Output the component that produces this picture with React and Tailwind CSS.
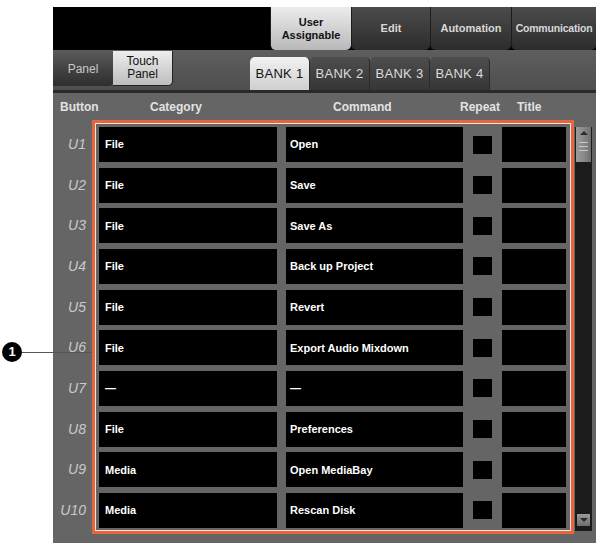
import React from "react";

const rows = [
  { id: "U1", category: "File", command: "Open" },
  { id: "U2", category: "File", command: "Save" },
  { id: "U3", category: "File", command: "Save As" },
  { id: "U4", category: "File", command: "Back up Project" },
  { id: "U5", category: "File", command: "Revert" },
  { id: "U6", category: "File", command: "Export Audio Mixdown" },
  { id: "U7", category: "—", command: "—" },
  { id: "U8", category: "File", command: "Preferences" },
  { id: "U9", category: "Media", command: "Open MediaBay" },
  { id: "U10", category: "Media", command: "Rescan Disk" },
];

const font = "font-['Liberation_Sans',Arial,sans-serif]";

function TopTab({ children, active, width }) {
  return (
    <div
      className={`${width} h-full flex items-center justify-center text-center leading-[13px] font-bold text-[11px] rounded-b-[5px] border-l border-[#1c1c1c] ${
        active
          ? "bg-gradient-to-b from-[#ececec] to-[#b9b9b9] text-[#111]"
          : "bg-gradient-to-b from-[#4c4c4c] to-[#2c2c2c] text-[#d8d8d8]"
      }`}
    >
      {children}
    </div>
  );
}

function BankTab({ label, active }) {
  return (
    <div
      className={`w-[60px] h-[33px] flex items-center justify-center text-[13px] tracking-[0.3px] rounded-t-[5px] border-r border-[#2a2a2a] ${
        active
          ? "bg-gradient-to-b from-[#f2f2f2] to-[#cfcfcf] text-[#111]"
          : "bg-gradient-to-b from-[#4e4e4e] to-[#363636] text-[#dcdcdc]"
      }`}
    >
      {label}
    </div>
  );
}

export default function App() {
  return (
    <div className={`relative w-[596px] h-[548px] bg-white pt-[7px] pl-[53px] ${font}`}>
      <div className="w-[543px] h-[536px] flex flex-col bg-black">
        {/* mode tabs */}
        <div className="h-[43px] flex justify-end bg-black">
          <TopTab active width="w-[81px]">
            User
            <br />
            Assignable
          </TopTab>
          <TopTab width="w-[79px]">Edit</TopTab>
          <TopTab width="w-[81px]">Automation</TopTab>
          <TopTab width="w-[85px]">
            <span className="text-[10.5px] tracking-[-0.2px]">Communication</span>
          </TopTab>
        </div>

        {/* panel + bank selectors */}
        <div className="h-[40px] flex items-start bg-gradient-to-b from-[#5e5e5e] to-[#4f4f4f]">
          <div className="w-[60px] h-[35px] mt-px flex items-center justify-center text-[12px] text-[#c8c8c8] bg-gradient-to-b from-[#5a5a5a] to-[#2e2e2e] rounded-br-[4px]">
            Panel
          </div>
          <div className="w-[60px] h-[35px] mt-px flex flex-col items-center justify-center text-center leading-[13px] text-[12px] text-[#111] bg-gradient-to-b from-[#eeeeee] to-[#bdbdbd] rounded-br-[5px] border-r border-b border-[#222]">
            <span>Touch</span>
            <span>Panel</span>
          </div>
          <div className="ml-[77px] mt-[7px] flex">
            <BankTab label="BANK 1" active />
            <BankTab label="BANK 2" />
            <BankTab label="BANK 3" />
            <BankTab label="BANK 4" />
          </div>
        </div>
        <div className="h-[3px] bg-[#2a2a2a]" />

        {/* assignment table */}
        <div className="relative flex-1 bg-[#656565]">
          <div className="h-[27px] flex items-center text-[12px] font-bold text-[#e2e2e2]">
            <span className="w-[97px] pl-[7px]">Button</span>
            <span className="w-[183px]">Category</span>
            <span className="w-[127px]">Command</span>
            <span className="w-[57px]">Repeat</span>
            <span>Title</span>
          </div>

          <div className="mt-[7px] flex">
            <div className="w-[513px] flex flex-col gap-[5.67px]">
              {rows.map((r) => (
                <div key={r.id} className="h-[35px] flex items-center">
                  <div className="w-[39px] pr-[6px] text-right italic text-[14px] text-[#c9c9c9]">
                    {r.id}
                  </div>
                  <div className="ml-[7px] w-[178px] h-full bg-black flex items-center pl-[6px] text-[11px] font-bold text-white">
                    {r.category}
                  </div>
                  <div className="ml-[9px] w-[177px] h-full bg-black flex items-center pl-[4px] text-[11px] font-bold text-white">
                    {r.command}
                  </div>
                  <div className="w-[39px] h-full flex items-center justify-center">
                    <div className="w-[19px] h-[18px] bg-black" />
                  </div>
                  <div className="w-[64px] h-full bg-black" />
                </div>
              ))}
            </div>

            {/* scrollbar */}
            <div className="ml-[9px] w-[17px] h-[404px] bg-[#1b1b1b] flex flex-col items-center justify-between">
              <div className="w-[15px] h-[35px] bg-gradient-to-r from-[#9a9a9a] via-[#8a8a8a] to-[#6f6f6f] flex flex-col items-center pt-[4px] gap-[3px]">
                <div className="w-0 h-0 border-l-[4px] border-r-[4px] border-b-[4px] border-l-transparent border-r-transparent border-b-[#2b2b2b]" />
                <div className="mt-[4px] w-[9px] h-px bg-[#c9c9c9]" />
                <div className="w-[9px] h-px bg-[#c9c9c9]" />
                <div className="w-[9px] h-px bg-[#c9c9c9]" />
              </div>
              <div className="mb-[5px] w-[13px] h-[12px] bg-gradient-to-b from-[#9a9a9a] to-[#6e6e6e] flex items-center justify-center">
                <div className="w-0 h-0 border-l-[4px] border-r-[4px] border-t-[4px] border-l-transparent border-r-transparent border-t-[#2b2b2b]" />
              </div>
            </div>
          </div>

          <div className="h-[9px]" />

          {/* highlight frame */}
          <div className="absolute left-[39px] top-[27px] w-[482px] h-[414px] border-[3px] border-[#e8643c] pointer-events-none">
            <div className="w-full h-full border border-[#f3e7dc]" />
          </div>
        </div>
      </div>

      {/* callout 1 */}
      <div className="absolute left-[20px] top-[352px] w-[72px] h-px bg-[#555]" />
      <div className="absolute left-[2px] top-[342px] w-[20px] h-[20px] rounded-full bg-black text-white text-[13px] font-bold flex items-center justify-center">
        1
      </div>
    </div>
  );
}
